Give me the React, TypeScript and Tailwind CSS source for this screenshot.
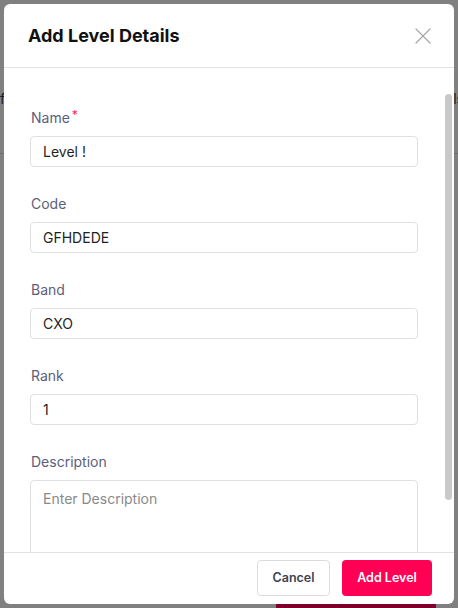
import { X } from 'lucide-react';

const fields = [
  { label: 'Name', value: 'Level !', required: true },
  { label: 'Code', value: 'GFHDEDE' },
  { label: 'Band', value: 'CXO' },
  { label: 'Rank', value: '1' },
];

export default function App() {
  return (
    <div
      className="relative h-[608px] w-[458px] overflow-hidden bg-[#808080]"
      style={{ fontFamily: 'Inter, "Noto Sans", sans-serif' }}
    >
      {/* Dimmed page behind the dialog */}
      <div className="absolute left-0 top-[88px] text-[14px] text-[#1a1a1a]">f</div>
      <div className="absolute right-[-6px] top-[88px] text-[14px] text-[#1a1a1a]">ls</div>
      <div className="absolute left-0 right-0 top-[153px] h-px bg-[#6e6e6e]" />
      <div className="absolute bottom-0 left-[276px] h-[8px] w-[160px] bg-[#7f0029]" />

      {/* Dialog */}
      <div className="relative z-10 p-1">
        <div className="flex h-[600px] w-[450px] flex-col overflow-hidden rounded-md bg-white">
          {/* Header */}
          <div className="flex h-[64px] shrink-0 items-center justify-between border-b border-[#e2e2e2] pl-6 pr-[17px]">
            <h2 className="text-[18px] font-bold text-[#111111]">Add Level Details</h2>
            <X className="h-7 w-7 text-[#a8a8a8]" strokeWidth={1.1} />
          </div>

          {/* Body */}
          <div className="relative flex-1 overflow-hidden">
            <div className="flex flex-col pl-[26px] pr-[36px] pt-[39px]">
              {fields.map((f) => (
                <div key={f.label} className="mb-[26px] flex flex-col">
                  <label className="mb-[9px] flex h-5 items-center pl-px text-[14px] text-[#5d607a]">
                    {f.label}
                    {f.required && <span className="ml-0.5 -mt-1 text-[12px] text-[#ff1a6b]">*</span>}
                  </label>
                  <div className="flex h-[31px] items-center rounded border border-[#e0e0e0] px-3 text-[14px] text-[#1f1f1f]">
                    {f.value}
                  </div>
                </div>
              ))}
              <div className="flex flex-col">
                <label className="mb-[9px] flex h-5 items-center pl-px text-[14px] text-[#5d607a]">Description</label>
                <div className="h-[96px] rounded border border-[#e0e0e0] px-3 pt-[7px] text-[14px] text-[#8a8a8a]">
                  Enter Description
                </div>
              </div>
            </div>
            {/* Scrollbar thumb */}
            <div className="absolute right-[2px] top-[26px] h-[406px] w-[7px] rounded-full bg-[#c9c9c9]" />
          </div>

          {/* Footer */}
          <div className="flex h-[52px] shrink-0 items-start justify-end gap-3 border-t border-[#e2e2e2] pr-[22px] pt-[7px]">
            <button className="h-9 w-[73px] rounded border border-[#dcdcdc] bg-white text-[12.5px] font-semibold text-[#3f4350]">
              Cancel
            </button>
            <button className="h-9 w-[90px] rounded bg-[#ff0055] text-[12.5px] font-semibold text-white">
              Add Level
            </button>
          </div>
        </div>
      </div>
    </div>
  );
}
